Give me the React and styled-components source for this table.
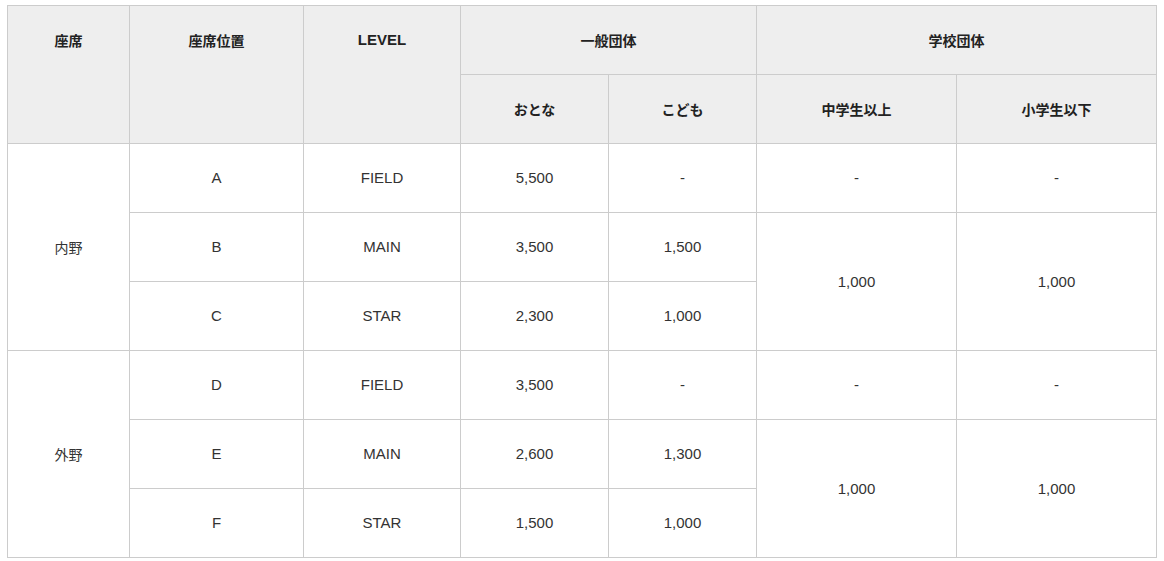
import React from "react";
import styled, { createGlobalStyle } from "styled-components";

const GlobalStyle = createGlobalStyle`
  body {
    margin: 0;
    background: #fff;
    font-family: "Liberation Sans", Arial, "Noto Sans CJK JP", sans-serif;
    color: #333;
  }
`;

const Wrapper = styled.div`
  padding: 5px 0 0 7px;
`;

const PriceTable = styled.table`
  width: 1150px;
  table-layout: fixed;
  border-collapse: collapse;
  border: 1px solid #ccc;
`;

const HeadCell = styled.th`
  background: #eee;
  border: 1px solid #ccc;
  padding: 25px 10px;
  height: 18px;
  line-height: 18px;
  font-size: ${(p) => (p.$jp ? "14px" : "15px")};
  font-weight: bold;
  color: #222;
  text-align: center;
  vertical-align: ${(p) => (p.$top ? "top" : "middle")};
  font-family: ${(p) =>
    p.$jp
      ? `"Noto Sans CJK JP", "Liberation Sans", sans-serif`
      : `"Liberation Sans", Arial, sans-serif`};
`;

const Cell = styled.td`
  border: 1px solid #ccc;
  padding: 25px 10px;
  height: 18px;
  line-height: 18px;
  font-size: ${(p) => (p.$jp ? "14px" : "15px")};
  color: #333;
  text-align: center;
  vertical-align: middle;
  font-family: ${(p) =>
    p.$jp
      ? `"Noto Sans CJK JP", "Liberation Sans", sans-serif`
      : `"Liberation Sans", Arial, sans-serif`};
`;

const widths = [122, 174, 157, 148, 148, 200, 200];

const areas = [
  {
    name: "内野",
    rows: [
      { seat: "A", level: "FIELD", adult: "5,500", child: "-", middle: "-", small: "-" },
      { seat: "B", level: "MAIN", adult: "3,500", child: "1,500", middle: "1,000", small: "1,000", span: 2 },
      { seat: "C", level: "STAR", adult: "2,300", child: "1,000", merged: true },
    ],
  },
  {
    name: "外野",
    rows: [
      { seat: "D", level: "FIELD", adult: "3,500", child: "-", middle: "-", small: "-" },
      { seat: "E", level: "MAIN", adult: "2,600", child: "1,300", middle: "1,000", small: "1,000", span: 2 },
      { seat: "F", level: "STAR", adult: "1,500", child: "1,000", merged: true },
    ],
  },
];

export default function App() {
  return (
    <Wrapper>
      <GlobalStyle />
      <PriceTable>
        <colgroup>
          {widths.map((w, i) => (
            <col key={i} style={{ width: w }} />
          ))}
        </colgroup>
        <thead>
          <tr>
            <HeadCell $jp $top rowSpan={2}>座席</HeadCell>
            <HeadCell $jp $top rowSpan={2}>座席位置</HeadCell>
            <HeadCell $top rowSpan={2}>LEVEL</HeadCell>
            <HeadCell $jp colSpan={2}>一般団体</HeadCell>
            <HeadCell $jp colSpan={2}>学校団体</HeadCell>
          </tr>
          <tr>
            <HeadCell $jp>おとな</HeadCell>
            <HeadCell $jp>こども</HeadCell>
            <HeadCell $jp>中学生以上</HeadCell>
            <HeadCell $jp>小学生以下</HeadCell>
          </tr>
        </thead>
        <tbody>
          {areas.map((area) =>
            area.rows.map((r, i) => (
              <tr key={area.name + r.seat}>
                {i === 0 && (
                  <Cell $jp rowSpan={area.rows.length}>
                    {area.name}
                  </Cell>
                )}
                <Cell>{r.seat}</Cell>
                <Cell>{r.level}</Cell>
                <Cell>{r.adult}</Cell>
                <Cell>{r.child}</Cell>
                {!r.merged && <Cell rowSpan={r.span || 1}>{r.middle}</Cell>}
                {!r.merged && <Cell rowSpan={r.span || 1}>{r.small}</Cell>}
              </tr>
            ))
          )}
        </tbody>
      </PriceTable>
    </Wrapper>
  );
}
